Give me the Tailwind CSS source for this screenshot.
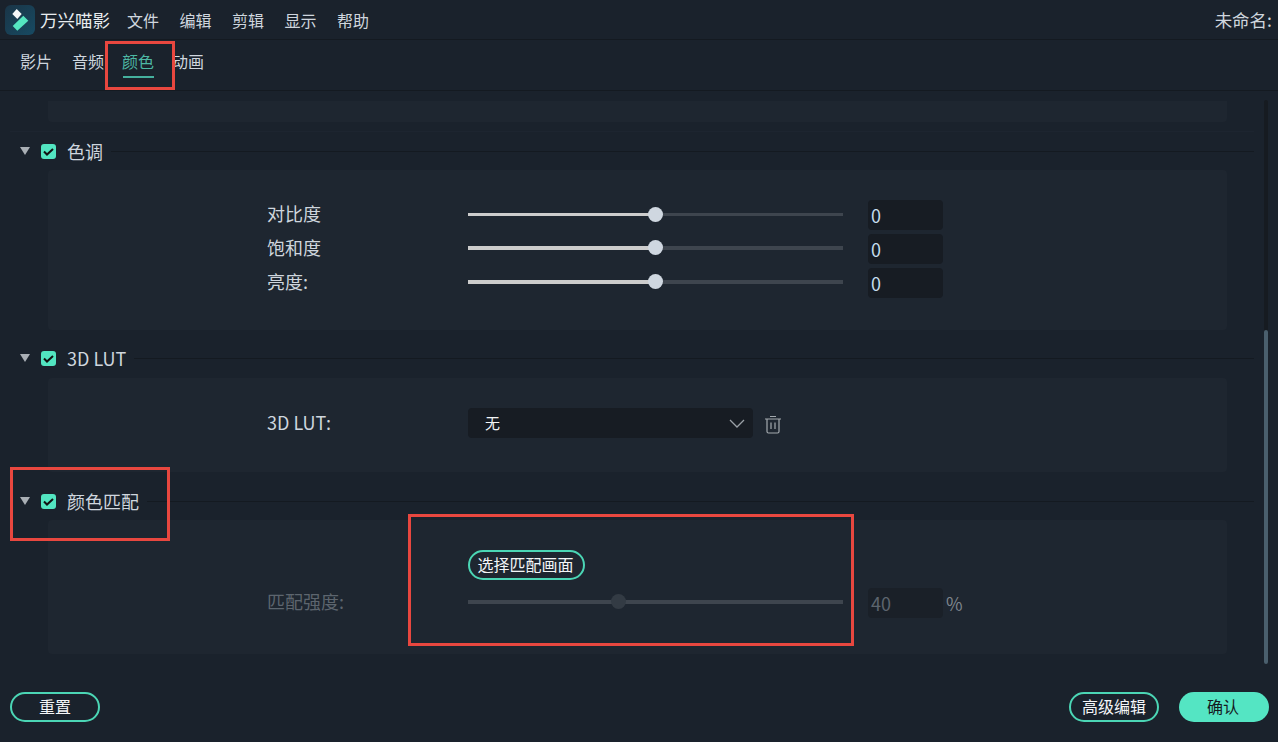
<!DOCTYPE html>
<html lang="zh">
<head>
<meta charset="utf-8">
<script src="https://cdn.jsdelivr.net/npm/@tailwindcss/browser@4"></script>
</head>
<body class="m-0 bg-[#1a222c]">
<div class="relative w-[1278px] h-[742px] overflow-hidden bg-[#1a222c] text-[#cfd6de] font-['Noto_Sans_CJK_SC','Noto_Sans',sans-serif] text-[16px] leading-[24px] flex flex-col">

  <!-- title bar -->
  <header class="h-[40px] shrink-0 border-b border-[#141a21] flex items-center pl-[5px] pr-[6px]">
    <svg class="w-[30px] h-[30px] shrink-0" viewBox="0 0 30 30">
      <defs><linearGradient id="g" x1="0" y1="0" x2="1" y2="1"><stop offset="0" stop-color="#1a3547"/><stop offset="1" stop-color="#174a62"/></linearGradient></defs>
      <rect width="30" height="30" rx="6" fill="url(#g)"/>
      <path d="M11.700 4 L16.700 9 L12.300 14 L7.300 9 Z" fill="#f4f7f8"/>
      <path d="M18.300 10.700 L23.300 15.700 L12.300 25.700 L7.700 21 Z" fill="#55e6c1"/>
    </svg>
    <span class="ml-[5px] text-[17.500px] text-[#e8ecef]">万兴喵影</span>
    <nav class="ml-[17px] flex gap-[20.500px]">
      <span>文件</span><span>编辑</span><span>剪辑</span><span>显示</span><span>帮助</span>
    </nav>
    <span class="ml-auto text-[17.500px]">未命名:</span>
  </header>

  <!-- tabs -->
  <div class="h-[51px] shrink-0 border-b border-[#141a21] flex pl-[20px]">
    <span class="h-full pt-[9px]">影片</span>
    <span class="h-full pt-[9px] ml-[20px]">音频</span>
    <span class="relative h-full pt-[9px] ml-[18px] text-[#4db8a4]">颜色<span class="absolute left-[1px] right-0 top-[36px] h-[2px] bg-[#45b09e]"></span></span>
    <span class="h-full pt-[9px] ml-[18px]">动画</span>
  </div>

  <!-- scroll area -->
  <div class="flex-1 flex min-h-0">
    <main class="w-[1254px] shrink-0 flex flex-col pt-[10px]">
      <div class="ml-[48px] w-[1179px] h-[21px] rounded-b-[4px] bg-[#1e2630]"></div>
      <div class="mt-[9px] ml-[10px] h-px bg-[#1d2530]"></div>

      <!-- 色调 -->
      <div class="mt-[4px] mb-[4px] h-[30px] pl-[20px] flex items-center text-[18px]">
        <svg class="w-[10px] h-[8px] shrink-0" viewBox="0 0 10 8"><path d="M0 0H10L5 8Z" fill="#a9afb5"/></svg>
        <span class="ml-[11px] w-[15px] h-[15px] rounded-[3px] bg-[#52e5c1] shrink-0 flex items-center justify-center"><svg class="w-[15px] h-[15px]" viewBox="0 0 15 15"><path d="M3 7.500 L6 10.500 L12 5" fill="none" stroke="#111" stroke-width="2"/></svg></span>
        <span class="ml-[11px]">色调</span>
        <span class="ml-[8px] flex-1 h-px bg-[#141a21]"></span>
      </div>
      <section class="ml-[48px] w-[1179px] h-[160px] rounded-[4px] bg-[#1e2630] pl-[219px] pt-[30px] flex flex-col gap-[4px] text-[18px]">
        <div class="h-[30px] flex items-center">
          <span class="w-[201px] -mt-[4px]">对比度</span>
          <div class="relative w-[375px] h-[3px] bg-[#3e454e] -mt-[1px]"><div class="h-full w-[187px] bg-[#cccccc]"></div><span class="absolute left-[180px] -top-[6px] w-[15px] h-[15px] rounded-full bg-[#cfd7e0]"></span></div>
          <div class="ml-[25px] w-[75px] h-[30px] rounded-[4px] bg-[#171c23] pl-[3px] flex items-center text-[#c4dcec]">0</div>
        </div>
        <div class="h-[30px] flex items-center">
          <span class="w-[201px] -mt-[4px]">饱和度</span>
          <div class="relative w-[375px] h-[4px] bg-[#3e454e] -mt-[2px]"><div class="h-full w-[187px] bg-[#cccccc]"></div><span class="absolute left-[180px] -top-[6px] w-[15px] h-[15px] rounded-full bg-[#cfd7e0]"></span></div>
          <div class="ml-[25px] w-[75px] h-[30px] rounded-[4px] bg-[#171c23] pl-[3px] flex items-center text-[#c4dcec]">0</div>
        </div>
        <div class="h-[30px] flex items-center">
          <span class="w-[201px] -mt-[4px]">亮度:</span>
          <div class="relative w-[375px] h-[4px] bg-[#3e454e] -mt-[2px]"><div class="h-full w-[187px] bg-[#cccccc]"></div><span class="absolute left-[180px] -top-[6px] w-[15px] h-[15px] rounded-full bg-[#cfd7e0]"></span></div>
          <div class="ml-[25px] w-[75px] h-[30px] rounded-[4px] bg-[#171c23] pl-[3px] flex items-center text-[#c4dcec]">0</div>
        </div>
      </section>

      <!-- 3D LUT -->
      <div class="mt-[13px] mb-[5px] h-[30px] pl-[20px] flex items-center text-[18px]">
        <svg class="w-[10px] h-[8px] shrink-0" viewBox="0 0 10 8"><path d="M0 0H10L5 8Z" fill="#a9afb5"/></svg>
        <span class="ml-[11px] w-[15px] h-[15px] rounded-[3px] bg-[#52e5c1] shrink-0 flex items-center justify-center"><svg class="w-[15px] h-[15px]" viewBox="0 0 15 15"><path d="M3 7.500 L6 10.500 L12 5" fill="none" stroke="#111" stroke-width="2"/></svg></span>
        <span class="ml-[11px]">3D LUT</span>
        <span class="ml-[8px] flex-1 h-px bg-[#141a21]"></span>
      </div>
      <section class="ml-[48px] w-[1179px] h-[94px] rounded-[4px] bg-[#1e2630] pl-[219px] pt-[30px] text-[18px]">
        <div class="h-[30px] flex items-center">
          <span class="w-[201px] -mt-[2px]">3D LUT:</span>
          <div class="w-[285px] h-[30px] rounded-[4px] bg-[#171c23] pl-[17px] pr-[8px] flex items-center justify-between text-[#f2f4f6]">
            <span class="text-[15px]">无</span>
            <svg class="w-[16px] h-[9px]" viewBox="0 0 16 9"><path d="M1 1 L8 8 L15 1" fill="none" stroke="#9aa0a6" stroke-width="1.300"/></svg>
          </div>
          <svg class="ml-[11px] mt-[2px] w-[18px] h-[19px]" viewBox="0 0 18 19" fill="none" stroke="#a3a9ae" stroke-width="1.200"><path d="M1 4H17M6 1.500H12M3 4V16.500Q3 18 4.500 18H13.500Q15 18 15 16.500V4M7 7.500V14M11 7.500V14"/></svg>
        </div>
      </section>

      <!-- 颜色匹配 -->
      <div class="mt-[14px] mb-[4px] h-[30px] pl-[20px] flex items-center text-[18px]">
        <svg class="w-[10px] h-[8px] shrink-0" viewBox="0 0 10 8"><path d="M0 0H10L5 8Z" fill="#a9afb5"/></svg>
        <span class="ml-[11px] w-[15px] h-[15px] rounded-[3px] bg-[#52e5c1] shrink-0 flex items-center justify-center"><svg class="w-[15px] h-[15px]" viewBox="0 0 15 15"><path d="M3 7.500 L6 10.500 L12 5" fill="none" stroke="#111" stroke-width="2"/></svg></span>
        <span class="ml-[11px]">颜色匹配</span>
        <span class="ml-[8px] flex-1 h-px bg-[#141a21]"></span>
      </div>
      <section class="ml-[48px] w-[1179px] h-[134px] rounded-[4px] bg-[#1e2630] pl-[420px] pt-[30px] relative">
        <button class="block w-[117px] h-[30px] rounded-full border-[2px] border-[#4bd6b5] text-[16px] leading-[24px] text-[#f4f6f8] pb-[2px] pr-[2px]">选择匹配画面</button>
        <div class="mt-[8px] -ml-[201px] h-[30px] flex items-center text-[18px] text-[#5d656e]">
          <span class="w-[201px] -mt-[4px]">匹配强度:</span>
          <div class="relative w-[375px] h-[4px] bg-[#3e454e] -mt-[2px]"><span class="absolute left-[143px] -top-[6px] w-[15px] h-[15px] rounded-full bg-[#333b44]"></span></div>
          <div class="ml-[25px] w-[75px] h-[30px] rounded-[4px] bg-[#1a2028] pl-[3px] flex items-center">40</div>
          <span class="ml-[3px] text-[#7d848c]">%</span>
        </div>
      </section>
    </main>

    <!-- scrollbar -->
    <div class="ml-[10px] mt-[9px] mb-[7px] w-[4px] h-[564px] bg-[#161b21] flex flex-col justify-end rounded-[2px]">
      <div class="h-[334px] rounded-[2px] bg-[#4a5f6d]"></div>
    </div>
  </div>

  <!-- footer -->
  <footer class="h-[72px] shrink-0 flex items-start pt-[22px] pl-[10px] pr-[9px]">
    <button class="w-[90px] h-[30px] rounded-full border-[2px] border-[#4bd6b5] text-[#f4f6f8] pb-[2px]">重置</button>
    <button class="ml-auto w-[90px] h-[30px] rounded-full border-[2px] border-[#4bd6b5] text-[#f4f6f8] pb-[2px]">高级编辑</button>
    <button class="ml-[20px] w-[90px] h-[30px] rounded-full bg-[#54e5c3] text-[#15191e] pb-[2px] pr-[2px]">确认</button>
  </footer>

  <!-- annotation rectangles -->
  <div class="absolute left-[105px] top-[41px] w-[70px] h-[49px] border-[3px] border-[#e8473f]"></div>
  <div class="absolute left-[10px] top-[467px] w-[160px] h-[74px] border-[3px] border-[#e8473f]"></div>
  <div class="absolute left-[408px] top-[514px] w-[446px] h-[132px] border-[3px] border-[#e8473f]"></div>
</div>
</body>
</html>
